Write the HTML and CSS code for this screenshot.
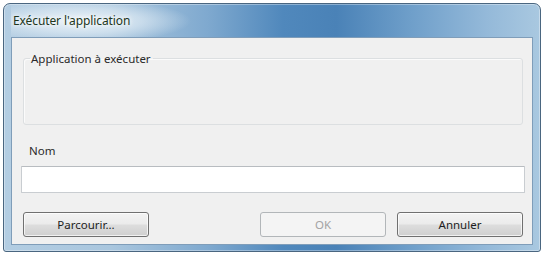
FILE: index.html
```html
<!DOCTYPE html>
<html lang="fr">
<head>
<meta charset="utf-8">
<title>Exécuter l'application</title>
<link rel="stylesheet" href="styles.css">
</head>
<body>
<div class="window">
  <div class="titlebar"><span class="title">Exécuter l'application</span></div>
  <div class="client">
    <fieldset class="group">
      <legend>Application à exécuter</legend>
    </fieldset>
    <label class="name-label" for="nom">Nom</label>
    <input class="textbox" id="nom" type="text">
    <div class="buttons">
      <button class="btn">Parcourir...</button>
      <div class="right-buttons">
        <button class="btn" disabled>OK</button>
        <button class="btn">Annuler</button>
      </div>
    </div>
  </div>
</div>
</body>
</html>
```
FILE: styles.css
```css
* { box-sizing: border-box; }
html, body { margin: 0; background: #ffffff; }
body {
  padding: 3px 2px 3px 3px;
  font-family: "Noto Sans", "DejaVu Sans", sans-serif;
  font-size: 11.5px;
  color: #222;
}
.window {
  width: 538px;
  height: 249px;
  border: 1px solid #4a6680;
  border-radius: 7px 7px 3px 3px;
  background: linear-gradient(to right, #b3cde2 0%, #a9c6de 20%, #7fa9cf 38%, #5088bc 52%, #4a82b7 62%, #6f9fca 76%, #94b9d9 90%, #a9c8e0 100%);
  padding: 0 7px 6px 7px;
  display: flex;
  flex-direction: column;
  box-shadow: inset 0 0 0 1px rgba(255,255,255,0.35);
}
.titlebar {
  height: 33px;
  display: flex;
  align-items: center;
  padding-left: 2px;
  padding-bottom: 1px;
  background: radial-gradient(ellipse 110px 22px at 70px 17px, rgba(240,246,250,0.95) 0%, rgba(220,233,243,0.7) 55%, rgba(200,220,236,0) 100%);
}
.title {
  font-size: 12px;
  color: #22361d;
  text-shadow: 0 0 4px #fff, 0 0 6px #fff;
  letter-spacing: -0.1px;
}
.client {
  flex: 1;
  background: #f0f0f0;
  border: 1px solid #7f9db9;
  padding: 13px 8px 0 9px;
  display: flex;
  flex-direction: column;
}
.group {
  margin: 0 1px 0 2px;
  padding: 0;
  height: 74px;
  border: 1px solid #dcdfe1;
  border-radius: 3px;
  box-shadow: inset 1px 1px 0 #fbfbfb;
}
.group legend {
  margin-left: 6px;
  padding: 0 2px 0 1px;
  color: #2a2a2a;
}
.name-label {
  margin-top: 18px;
  margin-left: 8px;
  height: 16px;
  line-height: 16px;
  color: #2a2a2a;
}
.textbox {
  margin-top: 7px;
  width: 504px;
  height: 27px;
  border: 1px solid #c9cdd1;
  border-top-color: #b8bcc0;
  background: #ffffff;
  border-radius: 1px;
  outline: none;
}
.buttons {
  margin-top: 19px;
  display: flex;
  justify-content: space-between;
  padding-left: 2px;
  width: 504px;
}
.right-buttons {
  display: flex;
  gap: 11px;
  margin-right: 2px;
}
.btn {
  width: 126px;
  height: 25px;
  font-family: "Noto Sans", "DejaVu Sans", sans-serif;
  font-size: 11.5px;
  color: #1e1e1e;
  border: 1px solid #707070;
  border-radius: 3px;
  background: linear-gradient(to bottom, #f3f3f3 0%, #ebebeb 48%, #dddddd 52%, #cfcfcf 100%);
  box-shadow: inset 0 0 0 1px rgba(255,255,255,0.7);
  padding: 0;
}
.btn:disabled {
  color: #a3a3a3;
  border-color: #b2b6b9;
  background: #f4f4f4;
  box-shadow: none;
}
```
